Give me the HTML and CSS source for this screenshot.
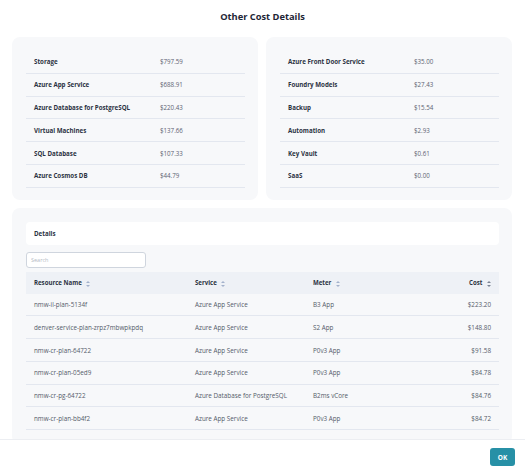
FILE: index.html
```html
<!DOCTYPE html>
<html lang="en">
<head>
    <meta charset="UTF-8">
    <meta name="viewport" content="width=device-width, initial-scale=1.0">
    <title>Other Cost Details</title>
    <link rel="stylesheet" href="styles.css">
</head>
<body>
    <div class="modal">
        <h1 class="modal-title">Other Cost Details</h1>

        <div class="modal-body">
            <div class="summary">
                <div class="card">
                    <table class="cost-table">
                        <tr><td class="name">Storage</td><td>$797.59</td></tr>
                        <tr><td class="name">Azure App Service</td><td>$688.91</td></tr>
                        <tr><td class="name">Azure Database for PostgreSQL</td><td>$220.43</td></tr>
                        <tr><td class="name">Virtual Machines</td><td>$137.66</td></tr>
                        <tr><td class="name">SQL Database</td><td>$107.33</td></tr>
                        <tr><td class="name">Azure Cosmos DB</td><td>$44.79</td></tr>
                    </table>
                </div>
                <div class="card">
                    <table class="cost-table">
                        <tr><td class="name">Azure Front Door Service</td><td>$35.00</td></tr>
                        <tr><td class="name">Foundry Models</td><td>$27.43</td></tr>
                        <tr><td class="name">Backup</td><td>$15.54</td></tr>
                        <tr><td class="name">Automation</td><td>$2.93</td></tr>
                        <tr><td class="name">Key Vault</td><td>$0.61</td></tr>
                        <tr><td class="name">SaaS</td><td>$0.00</td></tr>
                    </table>
                </div>
            </div>

            <div class="card details">
                <div class="details-header">Details</div>
                <input class="search" type="text" placeholder="Search">
                <table class="resource-table">
                    <thead>
                        <tr>
                            <th class="col-name">Resource Name <span class="sort"></span></th>
                            <th class="col-service">Service <span class="sort"></span></th>
                            <th class="col-meter">Meter <span class="sort"></span></th>
                            <th class="col-cost">Cost <span class="sort active"></span></th>
                        </tr>
                    </thead>
                    <tbody>
                        <tr><td>nmw-il-plan-5134f</td><td>Azure App Service</td><td>B3 App</td><td class="col-cost">$223.20</td></tr>
                        <tr><td>denver-service-plan-zrpz7mbwpkpdq</td><td>Azure App Service</td><td>S2 App</td><td class="col-cost">$148.80</td></tr>
                        <tr><td>nmw-cr-plan-64722</td><td>Azure App Service</td><td>P0v3 App</td><td class="col-cost">$91.58</td></tr>
                        <tr><td>nmw-cr-plan-05ed9</td><td>Azure App Service</td><td>P0v3 App</td><td class="col-cost">$84.78</td></tr>
                        <tr><td>nmw-cr-pg-64722</td><td>Azure Database for PostgreSQL</td><td>B2ms vCore</td><td class="col-cost">$84.76</td></tr>
                        <tr><td>nmw-cr-plan-bb4f2</td><td>Azure App Service</td><td>P0v3 App</td><td class="col-cost">$84.72</td></tr>
                    </tbody>
                </table>
            </div>
        </div>

        <div class="modal-footer">
            <button class="ok-button">OK</button>
        </div>
    </div>
</body>
</html>
```

FILE: styles.css
```css
body {
    margin: 0;
    font-family: "Open Sans", "Noto Sans", sans-serif;
    color: #4a5262;
    background: #fff;
}
.modal {
    width: 525px;
    height: 474px;
    display: flex;
    flex-direction: column;
    overflow: hidden;
}
.modal-title {
    margin: 0;
    padding-top: 10px;
    height: 27px;
    line-height: 14px;
    font-size: 9.3px;
    font-weight: 700;
    text-align: center;
    color: #1e2636;
}
.modal-body {
    flex: 1;
    overflow: hidden;
    padding: 0 13px 0 12px;
}
.summary {
    display: grid;
    grid-template-columns: 1fr 1fr;
    gap: 8px;
}
.card {
    background-color: #f7f8fa;
    border-radius: 8px;
    padding: 14px 13px 12px 14px;
}
table {
    width: 100%;
    border-collapse: collapse;
}
.cost-table td {
    height: 21.8px;
    padding: 0 0 0 8px;
    border-bottom: 1px solid #e3e7ef;
    font-size: 6.2px;
    color: #5c6372;
}
.cost-table td.name {
    width: 118px;
    font-weight: 700;
    color: #2b3242;
}
.details {
    margin-top: 8px;
    padding-top: 14px;
    padding-bottom: 14px;
}
.details-header {
    background: #fff;
    border-radius: 4px;
    height: 23px;
    line-height: 23px;
    padding-left: 8px;
    font-size: 6.2px;
    font-weight: 700;
    color: #2b3242;
}
.search {
    display: block;
    box-sizing: border-box;
    margin-top: 7px;
    width: 120px;
    height: 16px;
    padding: 0 4px;
    border: 1px solid #cfd5de;
    border-radius: 3px;
    font-family: inherit;
    font-size: 5.5px;
    outline: none;
}
.search::placeholder {
    color: #b4bac4;
}
.resource-table {
    margin-top: 4px;
    table-layout: fixed;
}
.resource-table th {
    height: 22px;
    padding: 0 8px;
    background-color: #eef1f6;
    text-align: left;
    font-size: 6.1px;
    font-weight: 700;
    color: #2b3242;
}
.resource-table td {
    height: 21.7px;
    padding: 0 8px;
    border-bottom: 1px solid #e3e7ef;
    font-size: 6.3px;
    color: #545b69;
    white-space: nowrap;
}
.resource-table .col-name {
    width: 145px;
}
.resource-table .col-service {
    width: 102px;
}
.resource-table .col-meter {
    width: 110px;
}
.resource-table .col-cost {
    text-align: right;
}
/* stacked up/down arrows beside each sortable header */
.sort {
    display: inline-block;
    position: relative;
    width: 4px;
    height: 6px;
    margin-left: 3px;
    vertical-align: middle;
}
.sort::before,
.sort::after {
    content: "";
    position: absolute;
    left: 0;
    border-left: 2px solid transparent;
    border-right: 2px solid transparent;
}
.sort::before {
    top: 0;
    border-bottom: 2.5px solid #a3b2cc;
}
.sort::after {
    bottom: 0;
    border-top: 2.5px solid #a3b2cc;
}
.sort.active::before {
    border-bottom-color: #7a8394;
}
.sort.active::after {
    border-top-color: #7a8394;
}
.modal-footer {
    height: 34px;
    border-top: 1px solid #eceef2;
    display: flex;
    align-items: center;
    justify-content: flex-end;
    padding-right: 10px;
}
.ok-button {
    width: 25px;
    height: 18px;
    padding: 0;
    background-color: #2790a6;
    color: #fff;
    border: none;
    border-radius: 3px;
    font-family: inherit;
    font-size: 6.5px;
    font-weight: 700;
    cursor: pointer;
}
```
